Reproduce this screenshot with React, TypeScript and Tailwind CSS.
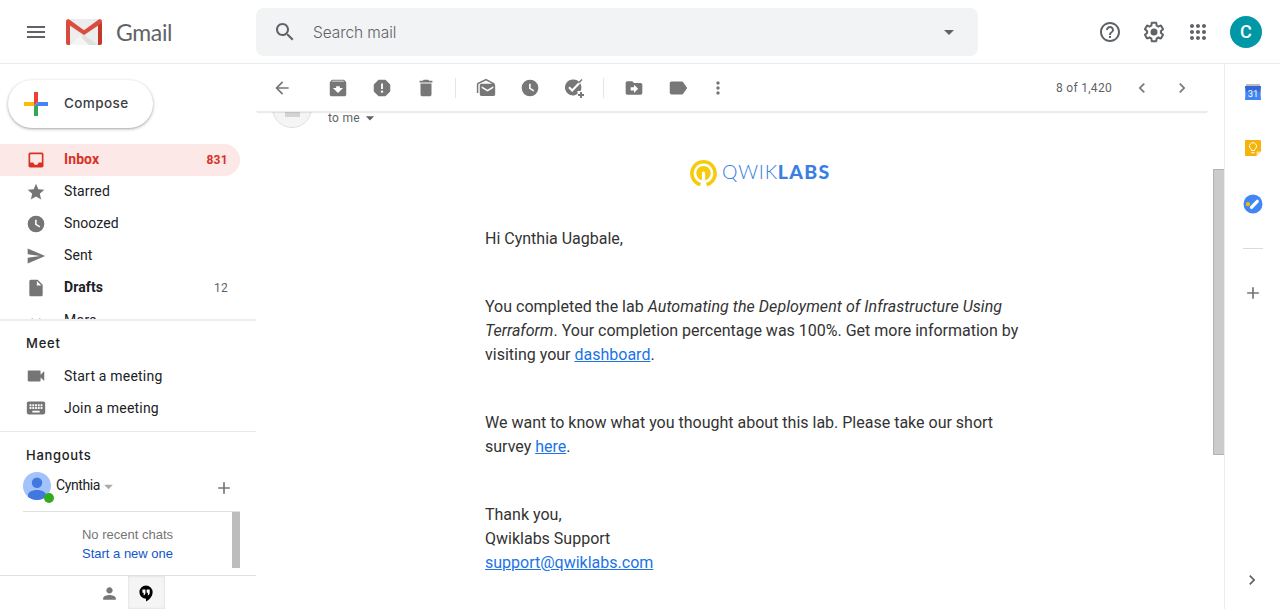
import React from "react";

const P = {
  menu: "M3 18h18v-2H3v2zm0-5h18v-2H3v2zm0-7v2h18V6H3z",
  search:
    "M15.5 14h-.79l-.28-.27C15.41 12.59 16 11.11 16 9.5 16 5.91 13.09 3 9.5 3S3 5.91 3 9.5 5.91 16 9.5 16c1.61 0 3.09-.59 4.23-1.57l.27.28v.79l5 4.99L20.49 19l-4.99-5zm-6 0C7.01 14 5 11.99 5 9.5S7.01 5 9.5 5 14 7.01 14 9.5 11.99 14 9.5 14z",
  help: "M11 18h2v-2h-2v2zm1-16C6.48 2 2 6.48 2 12s4.48 10 10 10 10-4.48 10-10S17.52 2 12 2zm0 18c-4.41 0-8-3.59-8-8s3.59-8 8-8 8 3.59 8 8-3.59 8-8 8zm0-14c-2.21 0-4 1.79-4 4h2c0-1.1.9-2 2-2s2 .9 2 2c0 2-3 1.75-3 5h2c0-2.25 3-2.5 3-5 0-2.21-1.79-4-4-4z",
  gear: "M13.85 22.25h-3.7c-.74 0-1.36-.54-1.45-1.27l-.27-1.89c-.27-.14-.53-.29-.79-.46l-1.8.72c-.7.26-1.47-.03-1.81-.65L2.2 15.53c-.35-.66-.2-1.44.36-1.88l1.53-1.19c-.01-.15-.02-.3-.02-.46 0-.15.01-.31.02-.46l-1.52-1.19c-.59-.45-.74-1.26-.37-1.88l1.85-3.19c.34-.62 1.11-.9 1.79-.63l1.81.73c.26-.17.52-.32.78-.46l.27-1.91c.09-.7.71-1.25 1.44-1.25h3.7c.74 0 1.36.54 1.45 1.27l.27 1.89c.27.14.53.29.79.46l1.8-.72c.71-.26 1.48.03 1.82.65l1.84 3.18c.36.66.2 1.44-.36 1.88l-1.52 1.19c.01.15.02.3.02.46s-.01.31-.02.46l1.52 1.19c.56.45.72 1.23.37 1.86l-1.86 3.22c-.34.62-1.11.9-1.8.63l-1.8-.72c-.26.17-.52.32-.78.46l-.27 1.91c-.1.68-.72 1.22-1.46 1.22zm-3.23-2h2.76l.37-2.55.53-.22c.44-.18.88-.44 1.34-.78l.45-.34 2.38.96 1.38-2.4-2.03-1.58.07-.56c.03-.26.06-.51.06-.78s-.03-.53-.06-.78l-.07-.56 2.03-1.58-1.39-2.4-2.39.96-.45-.35c-.42-.32-.87-.58-1.33-.77l-.52-.22-.37-2.55h-2.76l-.37 2.55-.53.21c-.44.19-.88.44-1.34.79l-.45.33-2.38-.95-1.39 2.39 2.03 1.58-.07.56a7 7 0 0 0-.06.79c0 .26.02.53.06.78l.07.56-2.03 1.58 1.38 2.4 2.39-.96.45.35c.43.33.86.58 1.33.77l.53.22.38 2.55zM12 8.5a3.5 3.5 0 1 0 0 7 3.5 3.5 0 0 0 0-7z",
  apps: "M6 8c1.1 0 2-.9 2-2s-.9-2-2-2-2 .9-2 2 .9 2 2 2zm6 12c1.1 0 2-.9 2-2s-.9-2-2-2-2 .9-2 2 .9 2 2 2zm-6 0c1.1 0 2-.9 2-2s-.9-2-2-2-2 .9-2 2 .9 2 2 2zm0-6c1.1 0 2-.9 2-2s-.9-2-2-2-2 .9-2 2 .9 2 2 2zm6 0c1.1 0 2-.9 2-2s-.9-2-2-2-2 .9-2 2 .9 2 2 2zm4-8c0 1.1.9 2 2 2s2-.9 2-2-.9-2-2-2-2 .9-2 2zm-4 2c1.1 0 2-.9 2-2s-.9-2-2-2-2 .9-2 2 .9 2 2 2zm6 6c1.1 0 2-.9 2-2s-.9-2-2-2-2 .9-2 2 .9 2 2 2zm0 6c1.1 0 2-.9 2-2s-.9-2-2-2-2 .9-2 2 .9 2 2 2z",
  inbox:
    "M19 3H4.99c-1.11 0-1.98.89-1.98 2L3 19c0 1.1.88 2 1.99 2H19c1.1 0 2-.9 2-2V5c0-1.11-.9-2-2-2zm0 12h-4c0 1.66-1.35 3-3 3s-3-1.34-3-3H4.99V5H19v10z",
  star: "M12 17.27L18.18 21l-1.64-7.03L22 9.24l-7.19-.61L12 2 9.19 8.63 2 9.24l5.46 4.73L5.82 21z",
  clock: "M12 2a10 10 0 1 0 0 20 10 10 0 0 0 0-20zm4.1 14.3L10.9 13V6.8h1.9v5.3l4.3 2.6-1 1.6z",
  send: "M2.01 21L23 12 2.01 3 2 10l15 2-15 2z",
  file: "M6 2c-1.1 0-2 .9-2 2v16c0 1.1.9 2 2 2h12c1.1 0 2-.9 2-2V8l-6-6H6zm7 7V3.5L18.5 9H13z",
  down: "M7.41 8.59L12 13.17l4.59-4.58L18 10l-6 6-6-6 1.41-1.41z",
  left: "M15.41 7.41L14 6l-6 6 6 6 1.41-1.41L10.83 12z",
  right: "M10 6L8.59 7.41 13.17 12l-4.58 4.59L10 18l6-6z",
  caret: "M7 10l5 5 5-5z",
  video:
    "M17 10.5V7c0-.55-.45-1-1-1H4c-.55 0-1 .45-1 1v10c0 .55.45 1 1 1h12c.55 0 1-.45 1-1v-3.5l4 4v-11l-4 4z",
  keyboard:
    "M20 5H4c-1.1 0-1.99.9-1.99 2L2 17c0 1.1.9 2 2 2h16c1.1 0 2-.9 2-2V7c0-1.1-.9-2-2-2zm-9 3h2v2h-2V8zm0 3h2v2h-2v-2zM8 8h2v2H8V8zm0 3h2v2H8v-2zm-1 2H5v-2h2v2zm0-3H5V8h2v2zm9 7H8v-2h8v2zm0-4h-2v-2h2v2zm0-3h-2V8h2v2zm3 3h-2v-2h2v2zm0-3h-2V8h2v2z",
  plus: "M19 13h-6v6h-2v-6H5v-2h6V5h2v6h6v2z",
  person:
    "M12 12c2.21 0 4-1.79 4-4s-1.79-4-4-4-4 1.79-4 4 1.79 4 4 4zm0 2c-2.67 0-8 1.34-8 4v2h16v-2c0-2.66-5.33-4-8-4z",
  back: "M20 11H7.83l5.59-5.59L12 4l-8 8 8 8 1.41-1.41L7.83 13H20v-2z",
  archive:
    "M20.54 5.23l-1.39-1.68C18.88 3.21 18.47 3 18 3H6c-.47 0-.88.21-1.16.55L3.46 5.23C3.17 5.57 3 6.02 3 6.5V19c0 1.1.9 2 2 2h14c1.1 0 2-.9 2-2V6.5c0-.48-.17-.93-.46-1.27zM12 17.5L6.5 12H10v-2h4v2h3.5L12 17.5zM5.12 5l.81-1h12l.94 1H5.12z",
  report:
    "M15.73 3H8.27L3 8.27v7.46L8.27 21h7.46L21 15.73V8.27L15.73 3zM12 17.3c-.72 0-1.3-.58-1.3-1.3 0-.72.58-1.3 1.3-1.3.72 0 1.3.58 1.3 1.3 0 .72-.58 1.3-1.3 1.3zm1-4.3h-2V7h2v6z",
  trash: "M6 19c0 1.1.9 2 2 2h8c1.1 0 2-.9 2-2V7H6v12zM19 4h-3.5l-1-1h-5l-1 1H5v2h14V4z",
  unread:
    "M22.500 7.500c0-.7-.4-1.100-.9-1.400L12 1 2.200 5.600C1.400 6 1 6.700 1 7.500V18h1.800V7.600L12 3l7.500 3.800H6.500c-1.100 0-2 .9-2 2V19.500c0 1.100.9 2 2 2h14.500c1.100 0 2-.9 2-2V9c0-.5-.2-1-.5-1.500zM20.800 12l-7 4.300-7-4.300v-2.200l7 4.300 7-4.300v2.200z",
  move: "M20 6h-8l-2-2H4c-1.100 0-2 .9-2 2v12c0 1.100.9 2 2 2h16c1.100 0 2-.9 2-2V8c0-1.100-.9-2-2-2zm-8 12v-3H8v-4h4V8l5 5-5 5z",
  label:
    "M17.63 5.84C17.27 5.33 16.67 5 16 5L5 5.01C3.9 5.01 3 5.9 3 7v10c0 1.1.9 1.99 2 1.99L16 19c.67 0 1.27-.33 1.63-.84L22 12l-4.37-6.16z",
  more: "M12 8c1.1 0 2-.9 2-2s-.9-2-2-2-2 .9-2 2 .9 2 2 2zm0 2c-1.1 0-2 .9-2 2s.9 2 2 2 2-.9 2-2-.9-2-2-2zm0 6c-1.1 0-2 .9-2 2s.9 2 2 2 2-.9 2-2-.9-2-2-2z",
};

function Icon({ d, className = "size-5" }: { d: string; className?: string }) {
  return (
    <svg viewBox="0 0 24 24" fill="currentColor" className={`shrink-0 ${className}`}>
      <path fillRule="evenodd" d={d} />
    </svg>
  );
}

function GmailLogo() {
  return (
    <svg viewBox="0 0 36 26" className="h-[26px] w-9 shrink-0">
      <rect width="36" height="26" rx="2" fill="#e3e3e3" />
      <path d="M4 26V7l14 10L32 7v19z" fill="#ededed" />
      <path d="M4 26l14-10 14 10z" fill="#dfdfdf" />
      <path d="M4 26l10-9 9 9z" fill="#f5f5f5" />
      <path d="M2 0h32L18 12z" fill="#ececec" />
      <path d="M32 4l4-1v21a2 2 0 0 1-2 2h-2z" fill="#c5372c" />
      <path d="M0 3h4v23H2a2 2 0 0 1-2-2z" fill="#d54b3d" />
      <path
        d="M0 2.500C0 .5 2 -.4 3.600.7L18 11.200 32.400.7C34-.4 36 .5 36 2.500c0 1-.4 1.700-1.200 2.200L18 16 1.200 4.700C.4 4.200 0 3.500 0 2.500z"
        fill="#dd4b3e"
      />
    </svg>
  );
}

function Header() {
  return (
    <header className="flex h-16 shrink-0 items-center border-b border-[#ebebeb] text-[#5f6368]">
      <div className="flex w-64 shrink-0 items-center pl-6">
        <Icon d={P.menu} className="size-6" />
        <div className="ml-[18px]">
          <GmailLogo />
        </div>
        <span className="mt-0.5 ml-3.5 font-['Lato',sans-serif] text-[23px] leading-none tracking-[-0.35px]">Gmail</span>
      </div>
      <div className="flex h-12 w-[722px] items-center rounded-lg bg-[#f1f3f4] pr-[17px] pl-[17px]">
        <Icon d={P.search} className="size-6" />
        <span className="mt-0.5 ml-4 font-['Inter',sans-serif] text-[15.5px] font-light tracking-[-0.08px]">Search mail</span>
        <Icon d={P.caret} className="ml-auto size-6" />
      </div>
      <div className="ml-auto flex items-center pr-[18px]">
        <Icon d={P.help} className="size-6" />
        <Icon d={P.gear} className="ml-5 size-6" />
        <Icon d={P.apps} className="ml-5 size-6" />
        <div className="ml-5 flex size-8 items-center justify-center rounded-full bg-[#0097a7] text-[18px] font-medium text-white">
          C
        </div>
      </div>
    </header>
  );
}

function NavRow({
  d,
  label,
  count,
  tone = "plain",
}: {
  d: string;
  label: string;
  count?: string;
  tone?: "active" | "bold" | "plain";
}) {
  const row =
    tone === "active"
      ? "bg-[#fce8e6] text-[#d93025] font-bold"
      : tone === "bold"
        ? "font-bold text-[#202124]"
        : "text-[#202124]";
  return (
    <div className={`flex h-8 w-60 shrink-0 items-center rounded-r-full pr-3 pl-[26px] ${row}`}>
      <Icon d={d} className={`size-5 ${tone === "active" ? "" : "text-[#757575]"}`} />
      <span className="ml-[18px] pb-0.5 text-sm leading-[30px] tracking-[0.1px]">{label}</span>
      {count && (
        <span className={`ml-auto text-xs tracking-[0.3px] ${tone === "bold" ? "font-normal text-[#5f6368]" : ""}`}>
          {count}
        </span>
      )}
    </div>
  );
}

function Sidebar() {
  return (
    <aside className="flex w-64 shrink-0 flex-col">
      <div className="flex h-20 shrink-0 pt-4 pl-2">
        <button className="flex h-12 w-[145px] items-center rounded-full bg-white pl-4 shadow-[0_1px_2px_0_rgba(60,64,67,0.302),0_1px_3px_1px_rgba(60,64,67,0.149)]">
          <svg viewBox="0 0 24 24" className="size-6 shrink-0">
            <path d="M10 0h4v10l-4 4z" fill="#ea4335" />
            <path d="M14 10h10v4H10z" fill="#4285f4" />
            <path d="M0 10h10v4H0z" fill="#fbbc04" />
            <path d="M10 14h4v10h-4z" fill="#34a853" />
          </svg>
          <span className="mb-0.5 ml-4 font-['Inter',sans-serif] text-[13.5px] font-medium tracking-[0.4px] text-[#3c4043]">
            Compose
          </span>
        </button>
      </div>
      <nav className="flex h-[176px] shrink-0 flex-col overflow-hidden">
        <NavRow d={P.inbox} label="Inbox" count="831" tone="active" />
        <NavRow d={P.star} label="Starred" />
        <NavRow d={P.clock} label="Snoozed" />
        <NavRow d={P.send} label="Sent" />
        <NavRow d={P.file} label="Drafts" count="12" tone="bold" />
        <div className="pt-px">
          <NavRow d={P.down} label="More" />
        </div>
      </nav>
      <section className="relative -mt-px flex h-[113px] shrink-0 flex-col border-t-2 border-b border-t-[#eceff1] border-b-[#e8eaed] bg-white pt-2 text-[#202124]">
        <h2 className="ml-[26px] h-[31px] font-['Inter',sans-serif] text-[13px] leading-7 font-medium tracking-[0.8px]">
          Meet
        </h2>
        <div className="flex h-8 shrink-0 items-center pl-[25px]">
          <Icon d={P.video} className="size-[22px] text-[#757575]" />
          <span className="ml-[17px] text-sm tracking-[0.2px]">Start a meeting</span>
        </div>
        <div className="flex h-8 shrink-0 items-center pl-[25px]">
          <Icon d={P.keyboard} className="size-[22px] text-[#757575]" />
          <span className="ml-[17px] text-sm tracking-[0.2px]">Join a meeting</span>
        </div>
      </section>
      <section className="flex h-36 shrink-0 flex-col border-b border-[#e0e0e0]">
        <h2 className="ml-[26px] h-10 font-['Inter',sans-serif] text-[13px] leading-[47px] font-medium tracking-[0.7px] text-[#202124]">
          Hangouts
        </h2>
        <div className="ml-[23px] flex h-10 w-[217px] shrink-0 items-start border-b border-[#e0e0e0]">
          <div className="relative">
            <svg viewBox="0 0 28 28" className="size-7">
              <defs>
                <clipPath id="face">
                  <circle cx="14" cy="14" r="14" />
                </clipPath>
              </defs>
              <g clipPath="url(#face)">
                <rect width="28" height="28" fill="#a1c2fa" />
                <circle cx="14" cy="10.700" r="5.200" fill="#4177df" />
                <path d="M5 28v-5c0-3.500 5-5 9-5s9 1.500 9 5v5z" fill="#4177df" />
              </g>
            </svg>
            <span className="absolute top-[21px] left-[21px] size-2.5 rounded-full bg-[#33ac1b]" />
          </div>
          <span className="ml-[5px] text-sm leading-[26px] tracking-[-0.4px] text-[#202124]">Cynthia</span>
          <Icon d={P.caret} className="mt-1 -ml-0.5 size-[21px] text-[#aaaaaa]" />
          <Icon d={P.plus} className="mt-1.5 mr-1.5 ml-auto size-5 text-[#777777]" />
        </div>
        <div className="flex h-14 w-60 shrink-0">
          <div className="flex flex-1 flex-col items-center pt-[13px] pl-[23px] font-['Liberation_Sans',sans-serif] text-[13px] leading-[19px]">
            <span className="text-[#757575]">No recent chats</span>
            <span className="text-[#1155cc]">Start a new one</span>
          </div>
          <div className="w-2 bg-[#bdbdbd]" />
        </div>
      </section>
      <div className="flex h-[33px] shrink-0 pl-[91px]">
        <div className="flex w-[37px] items-center justify-center pt-0.5 text-[#777777]">
          <Icon d={P.person} className="size-[19px]" />
        </div>
        <div className="flex w-[37px] items-center justify-center bg-[#f5f5f5] pt-px pr-0.5 shadow-[inset_0_0_3px_rgba(0,0,0,0.12)]">
          <svg viewBox="0 0 16 18" className="h-[17px] w-4">
            <path d="M8 .5A7 7 0 0 0 8 14.500V17.500c3.500-1.800 7-5 7-10A7 7 0 0 0 8 .5z" fill="#000" />
            <path
              d="M4.200 4.800h3.200v3.500c0 1.500-.8 2.200-1.900 2.700V8.200H4.200zM8.700 4.800h3.200v3.500c0 1.500-.8 2.200-1.900 2.700V8.200H8.700z"
              fill="#fff"
            />
          </svg>
        </div>
      </div>
    </aside>
  );
}

function Toolbar() {
  return (
    <div className="relative flex h-12 w-[952px] shrink-0 items-center border-b border-[#ececec] bg-white pl-4 text-[#777777] shadow-[0_2px_1px_-1px_rgba(0,0,0,0.08)]">
      <Icon d={P.back} />
      <Icon d={P.archive} className="ml-[35px] size-[22px]" />
      <Icon d={P.report} className="ml-[22px] size-[22px]" />
      <Icon d={P.trash} className="ml-[22px] size-[22px]" />
      <div className="ml-[18px] h-5 w-px bg-[#e5e5e5]" />
      <Icon d={P.unread} className="ml-5 size-5" />
      <Icon d={P.clock} className="ml-6 size-5" />
      <svg viewBox="0 0 22 22" className="ml-6 size-[22px] shrink-0">
        <path d="M9 2.500a8 8 0 1 0 4.500 14.600V14h3.100A8 8 0 0 0 9 2.500z" fill="currentColor" />
        <path d="M5 10.300l3.200 3.200 8.800-9.200" fill="none" stroke="#fff" strokeWidth="2" />
        <path d="M14.600 6l3.400-3.600" stroke="currentColor" strokeWidth="1.500" />
        <path d="M17 15v6M14 18h6" stroke="currentColor" strokeWidth="1.900" />
      </svg>
      <div className="ml-[17px] h-5 w-px bg-[#e5e5e5]" />
      <Icon d={P.move} className="ml-5 size-5" />
      <Icon d={P.label} className="ml-[23px] size-[22px]" />
      <Icon d={P.more} className="ml-[19px] size-5" />
      <span className="ml-auto text-xs tracking-[0.3px] text-[#5f6368]">8 of 1,420</span>
      <Icon d={P.left} className="ml-5 size-5" />
      <Icon d={P.right} className="mr-4 ml-5 size-5" />
    </div>
  );
}

function Link({ children }: { children: React.ReactNode }) {
  return <a className="text-[#1a73e8] underline">{children}</a>;
}

function Message() {
  return (
    <div className="flex min-h-0 flex-1 overflow-hidden">
      <div className="flex w-[957px] shrink-0 flex-col">
        <div className="flex h-4 items-end pl-4">
          <svg viewBox="0 0 40 40" className="size-10 shrink-0">
            <circle cx="20" cy="20" r="19.500" fill="#f5f5f5" stroke="#e0e0e0" />
            <path d="M13 20h15v9H13z" fill="#d3d3d3" />
          </svg>
          <div className="ml-4 flex items-center text-xs leading-5 tracking-[0.3px] text-[#5f6368]">
            to me
            <Icon d={P.caret} className="size-5" />
          </div>
        </div>
        <div className="mt-[31px] ml-[434px] flex h-7 items-center">
          <svg viewBox="0 0 27 27" className="size-[27px] shrink-0">
            <path d="M10.500 24.600A11.600 11.600 0 1 1 16.500 24.600" fill="none" stroke="#f5cb0c" strokeWidth="3.600" />
            <path d="M11.900 20.200V13a1.600 1.600 0 0 1 3.200 0v7.200A7.200 7.200 0 1 0 11.900 20.200z" fill="#f5cb0c" />
          </svg>
          <span className="mb-[3px] ml-[5px] flex font-['Lato',sans-serif] text-[19.5px] leading-none font-light tracking-[0.8px] text-[#3980e0]">
            QWIK<span className="font-black tracking-[1.3px]">LABS</span>
          </span>
        </div>
        <div className="ml-[229px] flex flex-col text-base leading-6 whitespace-nowrap text-[#333333]">
          <p className="mt-10">Hi Cynthia Uagbale,</p>
          <p className="mt-11">
            You completed the lab{" "}
            <i className="tracking-[0.06px]">Automating the Deployment of Infrastructure Using</i>
            <br />
            <i>Terraform</i>. Your completion percentage was 100%. Get more information by
            <br />
            visiting your <Link>dashboard</Link>.
          </p>
          <p className="mt-11">
            We want to know what you thought about this lab. Please take our short
            <br />
            survey <Link>here</Link>.
          </p>
          <p className="mt-11">
            Thank you,
            <br />
            Qwiklabs Support
            <br />
            <Link>support@qwiklabs.com</Link>
          </p>
        </div>
      </div>
      <div className="mt-[57px] h-[286px] w-[11px] border border-r-0 border-[#b3b3b3] bg-[#cbcbcb]" />
    </div>
  );
}

function SidePanel() {
  return (
    <aside className="flex w-14 shrink-0 flex-col items-center border-l border-[#ececec] pt-5">
      <svg viewBox="0 0 16 16" className="size-4 shrink-0">
        <path d="M1 0h14v3H1z" fill="#bdbdbd" />
        <path d="M0 2h16l-.5 7H.5z" fill="#3367d6" />
        <path d="M.5 7.500h15l.5 8.500H0z" fill="#4285f4" />
        <text x="8" y="12.800" textAnchor="middle" fontSize="9.500" fill="#fff" fontFamily="Roboto, sans-serif">
          31
        </text>
      </svg>
      <svg viewBox="0 0 16 16" className="mt-10 size-4 shrink-0">
        <path d="M1 0h14a1 1 0 0 1 1 1v10.500L11.500 16H1a1 1 0 0 1-1-1V1a1 1 0 0 1 1-1z" fill="#f5b30b" />
        <path d="M11.500 11.500H16L11.500 16z" fill="#fde293" />
        <path d="M6.300 10.500V9.300a3.500 3.500 0 1 1 3.400 0v1.200zM6.300 12.700h3.400" fill="none" stroke="#fff" strokeWidth="1" />
      </svg>
      <svg viewBox="0 0 20 20" className="mt-[38px] size-5 shrink-0">
        <circle cx="10" cy="10" r="9.500" fill="#4285f4" />
        <path d="M8.500 13.300l5.800-6" stroke="#fff" strokeWidth="3.200" strokeLinecap="round" />
        <circle cx="5" cy="10.200" r="2.100" fill="#f5b912" />
      </svg>
      <div className="mt-[34px] h-px w-5 shrink-0 bg-[#dadada]" />
      <Icon d={P.plus} className="mt-[34px] size-5 text-[#757575]" />
      <Icon d={P.right} className="mt-auto mr-0.5 mb-[19px] size-5 text-[#5f6368]" />
    </aside>
  );
}

export default function App() {
  return (
    <div className="flex h-[609px] w-[1280px] flex-col overflow-hidden bg-white font-['Roboto',sans-serif] text-[#757575]">
      <Header />
      <div className="flex min-h-0 flex-1">
        <Sidebar />
        <main className="flex w-[968px] shrink-0 flex-col">
          <Toolbar />
          <Message />
        </main>
        <SidePanel />
      </div>
    </div>
  );
}
